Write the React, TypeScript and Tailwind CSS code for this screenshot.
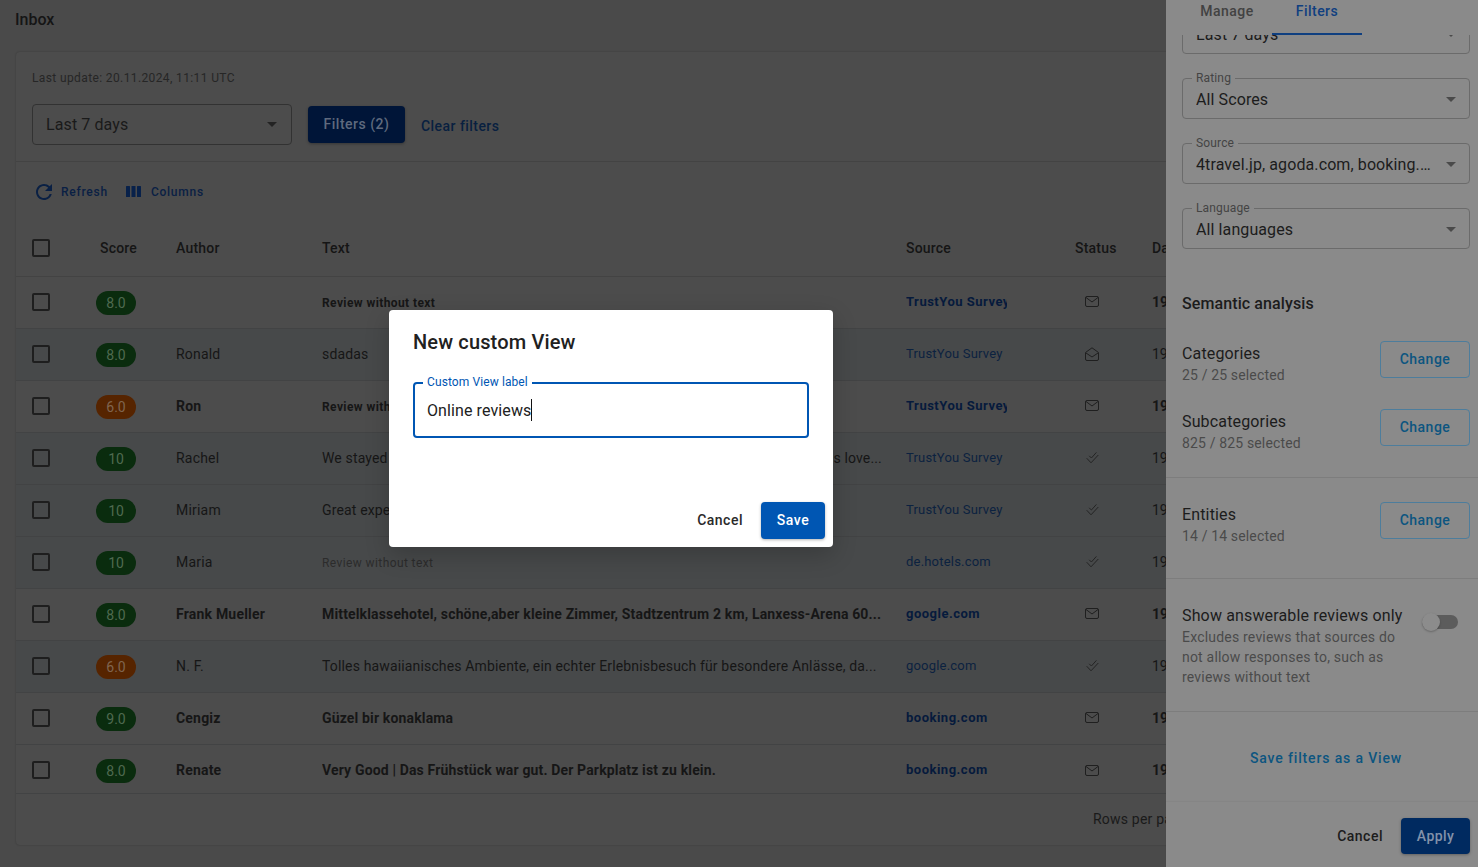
const ROWS = [
  { score: "8.0", tone: "green", author: "", text: "Review without text", small: true, source: "TrustYou Survey", unread: true },
  { score: "8.0", tone: "green", author: "Ronald", text: "sdadas", source: "TrustYou Survey", status: "open" },
  { score: "6.0", tone: "orange", author: "Ron", text: "Review without text", small: true, source: "TrustYou Survey", unread: true },
  { score: "10", tone: "green", author: "Rachel", text: "We stayed at this nice new hotel for eleven nights and the whole families and girls love...", source: "TrustYou Survey", status: "done" },
  { score: "10", tone: "green", author: "Miriam", text: "Great experience overall", source: "TrustYou Survey", status: "done" },
  { score: "10", tone: "green", author: "Maria", text: "Review without text", small: true, source: "de.hotels.com", status: "done" },
  { score: "8.0", tone: "green", author: "Frank Mueller", text: "Mittelklassehotel, schöne,aber kleine Zimmer, Stadtzentrum 2 km, Lanxess-Arena 60...", source: "google.com", unread: true },
  { score: "6.0", tone: "orange", author: "N. F.", text: "Tolles hawaiianisches Ambiente, ein echter Erlebnisbesuch für besondere Anlässe, da...", source: "google.com", status: "done" },
  { score: "9.0", tone: "green", author: "Cengiz", text: "Güzel bir konaklama", source: "booking.com", unread: true },
  { score: "8.0", tone: "green", author: "Renate", text: "Very Good | Das Frühstück war gut. Der Parkplatz ist zu klein.", source: "booking.com", unread: true },
];

function MailIcon() {
  return (
    <svg width="14" height="11" viewBox="0 0 14 11" fill="none" stroke="#1f1f1f" strokeWidth="1">
      <rect x="0.5" y="0.5" width="13" height="10" rx="1.5" />
      <path d="M1 1.5l6 4.500 6-4.500" />
    </svg>
  );
}

function MailOpenIcon() {
  return (
    <svg width="14" height="14" viewBox="0 0 14 14" fill="none" stroke="#1f1f1f" strokeWidth="1">
      <path d="M0.5 5.500L7 0.800l6.500 4.700v6.500a1.500 1.500 0 0 1-1.500 1.500H2a1.500 1.500 0 0 1-1.500-1.500z" />
      <path d="M1 6l6 4 6-4" />
    </svg>
  );
}

function DoubleCheckIcon() {
  return (
    <svg width="13" height="13" viewBox="0 0 13 13" fill="none" stroke="#242424" strokeWidth="1">
      <path d="M0.700 7.200l4.300 4.600 7.300-7.800" />
      <path d="M3.200 4.800l2.200 2.200 5-5.600" />
    </svg>
  );
}

function Caret({ color = "#1f1f1f" }: { color?: string }) {
  return (
    <svg width="10" height="5" viewBox="0 0 10 5" className="shrink-0">
      <path d="M0 0h10L5 5z" fill={color} />
    </svg>
  );
}

function Check() {
  return <div className="h-[18px] w-[18px] rounded-[2px] border-2 border-[#1e1e1e]" />;
}

function Row({ row, last }: { row: (typeof ROWS)[number]; last: boolean }) {
  const read = !row.unread;
  return (
    <div
      className={`grid grid-cols-[80px_80px_146px_584px_169px_77px_1fr] items-center border-b border-[#424344] ${
        last ? "h-[49px] pt-[2px]" : "h-[52px] pb-[2px]"
      } ${read ? "bg-[#47494a]" : ""}`}
    >
      <div className="pl-4">
        <Check />
      </div>
      <div>
        <span
          className={`mt-[2px] flex h-6 w-10 items-center justify-center rounded-full text-sm ${
            row.tone === "green" ? "bg-[#0a2c0e] text-[#4f6a50]" : "bg-[#562400] text-[#80654f]"
          }`}
        >
          {row.score}
        </span>
      </div>
      <div className={`text-sm tracking-[0.2px] text-[#161616] ${row.unread ? "font-bold" : ""}`}>{row.author}</div>
      <div
        className={`truncate pr-[20px] ${row.small ? "mt-[3px] text-xs tracking-[0.4px]" : "text-sm tracking-[0.15px]"} ${
          row.unread ? "font-bold text-[#161616]" : row.small ? "text-[#2c2c2c]" : "text-[#161616]"
        }`}
      >
        {row.text}
      </div>
      <div
        className={`w-[101px] overflow-hidden whitespace-nowrap text-[13px] ${
          row.unread ? "font-bold tracking-[0.5px] text-[#061a3c]" : "tracking-[0.2px] text-[#0c2240]"
        }`}
      >
        {row.source}
      </div>
      <div className="flex w-[34px] justify-center">
        {row.unread ? <MailIcon /> : row.status === "open" ? <MailOpenIcon /> : <DoubleCheckIcon />}
      </div>
      <div className={`whitespace-nowrap text-sm text-[#161616] ${row.unread ? "font-bold" : ""}`}>19.11.2024</div>
    </div>
  );
}

function OutlinedSelect({ label, value }: { label: string; value: string }) {
  return (
    <div className="relative flex h-[41px] items-center justify-between rounded border border-[#6b6b6b] px-[13px] pt-[2px]">
      <span className="absolute -top-[8px] left-[9px] bg-[#8a8a8a] px-[4px] text-xs leading-[15px] tracking-[0.15px] text-[#444444]">{label}</span>
      <span className="truncate pr-[12px] text-base tracking-[0.1px] text-[#1c1c1c]">{value}</span>
      <Caret color="#4a4a4a" />
    </div>
  );
}

function ChangeRow({ title, sub }: { title: string; sub: string }) {
  return (
    <div className="flex items-start justify-between">
      <div className="pt-px">
        <div className="text-base leading-[23px] tracking-[0.15px] text-[#1c1c1c]">{title}</div>
        <div className="text-sm leading-[21px] tracking-[0.15px] text-[#4a4a4a]">{sub}</div>
      </div>
      <button className="h-[37px] w-[90px] rounded border border-[#4d7d9c] pb-[2px] text-sm font-medium tracking-[0.5px] text-[#0c5580]">Change</button>
    </div>
  );
}

export default function App() {
  return (
    <div className="relative h-screen overflow-hidden bg-[#4a4a4a] font-['Roboto',sans-serif]">
      {/* Page */}
      <div className="flex h-[52px] items-center pb-[12px] pl-[15px]">
        <h1 className="text-base font-medium text-[#151515]">Inbox</h1>
      </div>
      <div className="mx-4 h-[793px] rounded bg-[#4c4c4c] shadow-[0_0_2px_rgba(0,0,0,0.25)]">
        <div className="h-[110px] border-b border-[#434343] pl-4 pt-[19px]">
          <p className="text-xs leading-[15px] tracking-[0.38px] text-[#262626]">Last update: 20.11.2024, 11:11 UTC</p>
          <div className="mt-[18px] flex items-center">
            <div className="flex h-[41px] w-[260px] items-center justify-between rounded border border-[#323232] pl-[13px] pr-[14px]">
              <span className="text-base tracking-[0.1px] text-[#1a1a1a]">Last 7 days</span>
              <Caret color="#232323" />
            </div>
            <button className="ml-4 h-[37px] w-[97px] rounded bg-[#001538] pb-[2px] text-sm font-medium tracking-[0.5px] text-[#5f6a7e] shadow-[0_1px_3px_rgba(0,0,0,0.3)]">Filters (2)</button>
            <span className="ml-4 mt-[2px] text-sm font-medium tracking-[0.45px] text-[#082040]">Clear filters</span>
          </div>
        </div>
        <div className="flex h-[57px] items-center pl-4 pt-[2px] text-xs font-medium tracking-[0.75px] text-[#0a2044]">
          <svg width="24" height="24" viewBox="0 0 24 24" fill="#0a2044">
            <path d="M17.650 6.350A7.958 7.958 0 0 0 12 4c-4.420 0-7.990 3.580-7.990 8s3.570 8 7.990 8c3.730 0 6.840-2.550 7.730-6h-2.080A5.990 5.990 0 0 1 12 18c-3.310 0-6-2.690-6-6s2.690-6 6-6c1.660 0 3.140.69 4.220 1.780L13 11h7V4l-2.350 2.350z" />
          </svg>
          <span className="ml-[5px]">Refresh</span>
          <svg width="15" height="11" viewBox="0 0 15 11" fill="#08214a" className="ml-[18px]">
            <rect width="4" height="11" rx="0.5" />
            <rect x="5.500" width="4" height="11" rx="0.5" />
            <rect x="11" width="4" height="11" rx="0.5" />
          </svg>
          <span className="ml-[10px]">Columns</span>
        </div>
        <div className="grid h-[58px] grid-cols-[80px_80px_146px_584px_169px_77px_1fr] items-center border-b border-[#434343] text-sm font-medium tracking-[0.2px] text-[#151515]">
          <div className="pl-4">
            <Check />
          </div>
          <div className="pl-[4px]">Score</div>
          <div>Author</div>
          <div>Text</div>
          <div>Source</div>
          <div>Status</div>
          <div>Date</div>
        </div>
        {ROWS.map((row, i) => (
          <Row key={i} row={row} last={i === ROWS.length - 1} />
        ))}
        <div className="flex justify-end pt-[15px] text-sm tracking-[0.2px] text-[#1a1a1a]">
          <span className="w-[369px] whitespace-nowrap">Rows per page:</span>
        </div>
      </div>

      {/* Filters drawer */}
      <aside className="absolute inset-y-0 right-0 flex w-[312px] flex-col bg-[#8a8a8a]">
        <div className="relative z-10 flex h-[35px] shrink-0 bg-[#8a8a8a] pl-4 text-sm font-medium tracking-[0.45px]">
          <div className="w-[90px] pt-px text-center text-[#424242]">Manage</div>
          <div className="w-[90px] border-b-2 border-[#0f3f80] pt-px text-center text-[#0f3f80]">Filters</div>
        </div>
        <div className="min-h-0 flex-1 overflow-hidden">
          <div className="-mt-[22px]">
            <div className="flex flex-col gap-[24px] pl-4 pr-2">
              <OutlinedSelect label="Period" value="Last 7 days" />
              <OutlinedSelect label="Rating" value="All Scores" />
              <OutlinedSelect label="Source" value="4travel.jp, agoda.com, booking.com" />
              <OutlinedSelect label="Language" value="All languages" />
            </div>
            <h2 className="mt-[43px] pl-4 text-base font-medium leading-[24px] tracking-[0.1px] text-[#1c1c1c]">Semantic analysis</h2>
            <div className="mt-[25px] flex flex-col gap-[23px] pl-4 pr-2">
              <ChangeRow title="Categories" sub="25 / 25 selected" />
              <ChangeRow title="Subcategories" sub="825 / 825 selected" />
            </div>
            <div className="mt-[23px] border-t border-[#7d7d7d] pl-4 pr-2 pt-6">
              <ChangeRow title="Entities" sub="14 / 14 selected" />
            </div>
            <div className="mt-[31px] flex justify-between border-t border-[#7d7d7d] pb-[24px] pl-4 pr-[20px] pt-6">
              <div className="w-[230px]">
                <div className="whitespace-nowrap pt-px text-base leading-[23px] tracking-[0.15px] text-[#1c1c1c]">Show answerable reviews only</div>
                <p className="text-sm leading-[20px] tracking-[0.2px] text-[#4a4a4a]">Excludes reviews that sources do not allow responses to, such as reviews without text</p>
              </div>
              <div className="relative mt-[12px] h-[14px] w-[36px] rounded-full bg-[#5c5c5c]">
                <span className="absolute left-0 -top-[2px] h-[18px] w-[18px] rounded-full bg-[#8c8c8c] shadow-[0_1px_2px_rgba(0,0,0,0.25)]" />
              </div>
            </div>
            <div className="flex h-[92px] items-center justify-center border-t border-[#7d7d7d] pl-[8px] text-sm font-medium tracking-[0.85px] text-[#0c5580]">Save filters as a View</div>
          </div>
        </div>
        <div className="relative flex h-[65px] shrink-0 items-center justify-end gap-[18px] bg-[#8a8a8a] pr-2 pt-[3px] shadow-[0_-1px_1px_rgba(0,0,0,0.03)]">
          <span className="text-sm font-medium tracking-[0.5px] text-[#1c1c1c]">Cancel</span>
          <button className="h-9 w-[69px] rounded bg-[#002a60] text-sm font-medium tracking-[0.4px] text-[#8392aa] shadow-[0_1px_3px_rgba(0,0,0,0.3)]">Apply</button>
        </div>
      </aside>

      {/* Dialog */}
      <div className="absolute left-[389px] top-[310px] h-[237px] w-[444px] rounded bg-white px-6 pt-[19px] shadow-[0_8px_24px_rgba(0,0,0,0.2)]">
        <h2 className="text-xl font-medium leading-[26px] tracking-[0.15px] text-[#212121]">New custom View</h2>
        <div className="relative mt-[27px] flex h-14 items-center rounded border-2 border-[#0056b3] pl-3">
          <span className="absolute -top-[9px] left-[8px] bg-white px-[4px] text-xs leading-[15px] tracking-[0.1px] text-[#0056b3]">Custom View label</span>
          <span className="pt-[2px] text-base tracking-[0.1px] text-[#212121]">Online reviews</span>
          <span className="h-[22px] w-px bg-[#111111]" />
        </div>
        <div className="absolute bottom-2 right-2 flex items-center gap-[18px]">
          <span className="pb-[2px] text-sm font-medium tracking-[0.5px] text-[#2a2a2a]">Cancel</span>
          <button className="h-[37px] w-16 rounded bg-[#0056b3] pb-[2px] text-sm font-medium tracking-[0.5px] text-white shadow-[0_1px_3px_rgba(0,0,0,0.3)]">Save</button>
        </div>
      </div>
    </div>
  );
}
